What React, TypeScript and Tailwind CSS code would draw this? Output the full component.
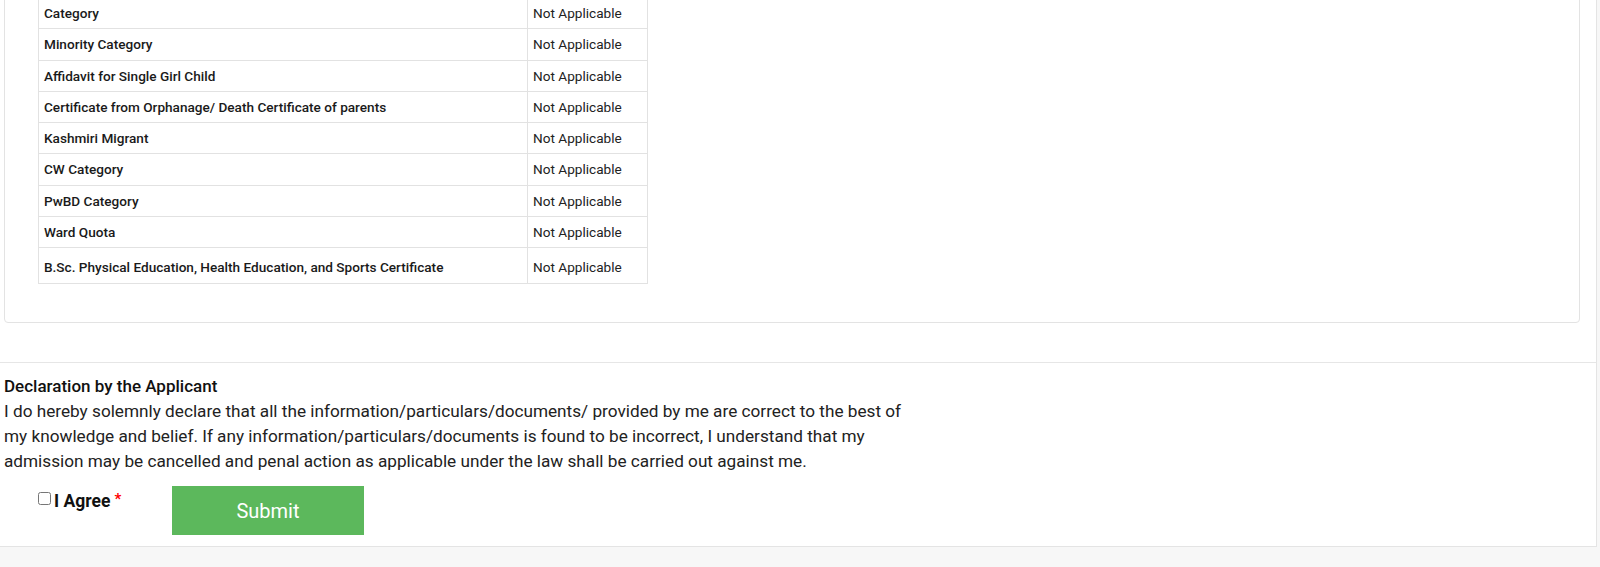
const rows = [
  "Category",
  "Minority Category",
  "Affidavit for Single Girl Child",
  "Certificate from Orphanage/ Death Certificate of parents",
  "Kashmiri Migrant",
  "CW Category",
  "PwBD Category",
  "Ward Quota",
];

const font = { fontFamily: "Roboto, 'Liberation Sans', sans-serif" };

export default function App() {
  return (
    <div className="min-h-[567px] bg-[#f7f7f7] overflow-hidden" style={font}>
      <div className="w-[1597px] bg-white border-r border-b border-[#e4e4e4] text-[#212121]">
        {/* documents panel */}
        <div className="ml-[4px] w-[1576px] -mt-[24px] border border-[#e3e3e3] rounded-[4px] pt-[20px] pb-[38px] pl-[33px]">
          <table className="w-[610px] border-collapse text-[13.6px]">
            <tbody>
              {rows.map((r) => (
                <tr key={r} className="h-[31.3px]">
                  <td className="w-[489px] border border-[#e2e2e2] px-[5px] font-medium text-[#1a1a1a]">{r}</td>
                  <td className="border border-[#e2e2e2] px-[5px] text-[#222]">Not Applicable</td>
                </tr>
              ))}
              <tr className="h-[36px]">
                <td className="border border-[#e2e2e2] px-[5px] pt-[2px] font-medium text-[#1a1a1a]">
                  B.Sc. Physical Education, Health Education, and Sports Certificate
                </td>
                <td className="border border-[#e2e2e2] px-[5px] pt-[2px] text-[#222]">Not Applicable</td>
              </tr>
            </tbody>
          </table>
        </div>

        {/* declaration */}
        <div className="mt-[39px] border-t border-[#e6e6e6] pt-[11px] pb-[11px] pl-[4px]">
          <div className="text-[17px] leading-[25px] font-medium text-[#111]">Declaration by the Applicant</div>
          <p className="w-[910px] text-[17.2px] leading-[25px] text-[#222]">
            I do hereby solemnly declare that all the information/particulars/documents/ provided by me are correct to the best of my knowledge and belief. If any information/particulars/documents is found to be incorrect, I understand that my admission may be cancelled and penal action as applicable under the law shall be carried out against me.
          </p>
          <div className="flex items-start mt-[12px]">
            <label className="flex items-start ml-[34px] w-[134px] pt-[5px]">
              <input type="checkbox" className="w-[13px] h-[13px] mt-[1px] mr-[3px] accent-[#333]" />
              <span className="text-[17.5px] leading-[17px] font-bold text-[#111] mt-[2px]">I Agree</span>
              <span className="text-[#ff0000] text-[15px] leading-[16px] ml-[4px] font-bold">*</span>
            </label>
            <button className="w-[192px] h-[49px] bg-[#5cb85c] text-white text-[20px]">Submit</button>
          </div>
        </div>
      </div>
    </div>
  );
}
